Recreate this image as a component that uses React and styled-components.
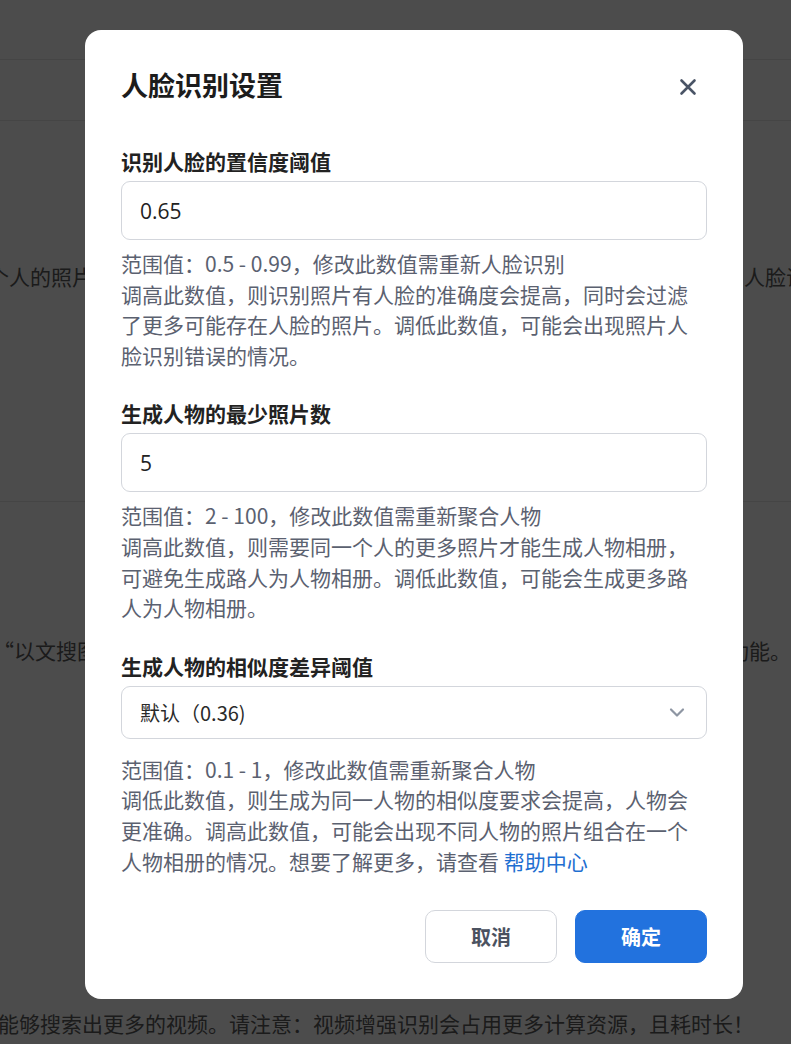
import React from "react";
import styled, { createGlobalStyle } from "styled-components";

const Global = createGlobalStyle`
  html, body { margin: 0; padding: 0; background: #fff; }
  body { font-family: "Noto Sans CJK SC", "Noto Sans", sans-serif; }
  * { box-sizing: border-box; }
`;

const Page = styled.div`
  width: 100%;
  height: 1044px;
  overflow: hidden;
  background: #fff;
`;

const TopBar = styled.div`
  height: 60px;
  border-bottom: 1px solid #e6e6e6;
`;

const SubBar = styled.div`
  height: 61px;
  border-bottom: 1px solid #e6e6e6;
`;

const Section = styled.section`
  padding-top: ${(p) => p.$top}px;
  height: ${(p) => p.$h}px;
  border-bottom: ${(p) => (p.$divider ? "1px solid #e6e6e6" : "none")};
`;

const BgLine = styled.p`
  margin: 0 0 ${(p) => p.$mb || 0}px;
  font-size: 21px;
  line-height: 30px;
  color: #5a5a5a;
  white-space: nowrap;
  overflow: hidden;
  text-indent: ${(p) => p.$indent || 0}px;
`;

const Overlay = styled.div`
  position: fixed;
  inset: 0;
  background: rgba(0, 0, 0, 0.7);
`;

const Dialog = styled.div`
  position: fixed;
  top: 30px;
  left: 85px;
  width: 658px;
  background: #fff;
  border-radius: 16px;
  padding: 36px 36px 36px;
  display: flex;
  flex-direction: column;
`;

const Header = styled.div`
  display: flex;
  align-items: center;
  justify-content: space-between;
  height: 38px;
  margin-bottom: 42px;
`;

const Title = styled.h2`
  margin: 0;
  font-size: 27px;
  line-height: 38px;
  font-weight: 700;
  color: #1c1c1c;
`;

const CloseButton = styled.button`
  border: none;
  background: none;
  padding: 0;
  width: 24px;
  height: 24px;
  margin-right: 7px;
  margin-top: 4px;
  display: flex;
  align-items: center;
  justify-content: center;
  cursor: pointer;
  color: #4a5466;
`;

const Field = styled.div`
  display: flex;
  flex-direction: column;
  margin-bottom: ${(p) => p.$mb}px;
`;

const Label = styled.label`
  font-size: 21px;
  line-height: 30px;
  font-weight: 700;
  color: #222;
  margin-bottom: 5px;
`;

const Input = styled.input`
  height: 59px;
  border: 1px solid #d3d6dc;
  border-radius: 9px;
  padding: 0 18px;
  font-family: "Open Sans", "Noto Sans CJK SC", sans-serif;
  font-size: 21px;
  color: #222;
  outline: none;
  background: #fff;
`;

const SelectBox = styled.div`
  height: 53px;
  border: 1px solid #d3d6dc;
  border-radius: 9px;
  padding: 0 18px;
  display: flex;
  align-items: center;
  justify-content: space-between;
  font-size: 20px;
  color: #2a2a2a;
  margin-bottom: 7px;
`;

const Chevron = styled.svg`
  width: 18px;
  height: 18px;
  color: #8e96a3;
  margin-right: 2px;
`;

const Help = styled.p`
  margin: 8px 0 0;
  font-size: 21px;
  line-height: 30.6px;
  color: #5b6170;
`;

const Link = styled.a`
  color: #1f6fd1;
  text-decoration: none;
`;

const Footer = styled.div`
  display: flex;
  justify-content: flex-end;
  gap: 18px;
  margin-top: 34px;
`;

const Button = styled.button`
  width: 132px;
  height: 53px;
  border-radius: 10px;
  font-family: "Noto Sans CJK SC", sans-serif;
  font-size: 20px;
  font-weight: 700;
  cursor: pointer;
  border: 1px solid ${(p) => (p.$primary ? "#2272de" : "#d3d6dc")};
  background: ${(p) => (p.$primary ? "#2272de" : "#fff")};
  color: ${(p) => (p.$primary ? "#fff" : "#4b5260")};
`;

export default function App() {
  return (
    <>
      <Global />
      <Page>
        <TopBar />
        <SubBar />
        <Section $top={140} $h={381} $divider>
          <BgLine $indent={-12}>
            个人的照片聚合为人物相册，方便您按人物浏览照片。如需使用该功能，请先开启人脸识别功能。
          </BgLine>
        </Section>
        <Section $top={133} $h={541}>
          <BgLine $indent={-7} $mb={343}>
            “以文搜图”可通过输入文字描述查找相应的照片，开启智能识别后即可使用此功能。
          </BgLine>
          <BgLine $indent={-2}>
            能够搜索出更多的视频。请注意：视频增强识别会占用更多计算资源，且耗时长！
          </BgLine>
        </Section>
      </Page>
      <Overlay />
      <Dialog role="dialog">
        <Header>
          <Title>人脸识别设置</Title>
          <CloseButton aria-label="关闭">
            <svg width="18" height="18" viewBox="0 0 18 18" fill="none">
              <path d="M2.5 2.5 L15.5 15.5 M15.5 2.5 L2.5 15.5" stroke="currentColor" strokeWidth="2.6" strokeLinecap="round" />
            </svg>
          </CloseButton>
        </Header>

        <Field $mb={28}>
          <Label>识别人脸的置信度阈值</Label>
          <Input defaultValue="0.65" />
          <Help>
            范围值：0.5 - 0.99，修改此数值需重新人脸识别
            <br />
            调高此数值，则识别照片有人脸的准确度会提高，同时会过滤了更多可能存在人脸的照片。调低此数值，可能会出现照片人脸识别错误的情况。
          </Help>
        </Field>

        <Field $mb={28}>
          <Label>生成人物的最少照片数</Label>
          <Input defaultValue="5" />
          <Help>
            范围值：2 - 100，修改此数值需重新聚合人物
            <br />
            调高此数值，则需要同一个人的更多照片才能生成人物相册，可避免生成路人为人物相册。调低此数值，可能会生成更多路人为人物相册。
          </Help>
        </Field>

        <Field $mb={0}>
          <Label>生成人物的相似度差异阈值</Label>
          <SelectBox>
            <span>默认（0.36)</span>
            <Chevron viewBox="0 0 18 18" fill="none">
              <path d="M3 6.5 L9 12.5 L15 6.5" stroke="currentColor" strokeWidth="2.2" strokeLinecap="round" strokeLinejoin="round" />
            </Chevron>
          </SelectBox>
          <Help>
            范围值：0.1 - 1，修改此数值需重新聚合人物
            <br />
            调低此数值，则生成为同一人物的相似度要求会提高，人物会更准确。调高此数值，可能会出现不同人物的照片组合在一个人物相册的情况。想要了解更多，请查看 <Link href="#">帮助中心</Link>
          </Help>
        </Field>

        <Footer>
          <Button>取消</Button>
          <Button $primary>确定</Button>
        </Footer>
      </Dialog>
    </>
  );
}
